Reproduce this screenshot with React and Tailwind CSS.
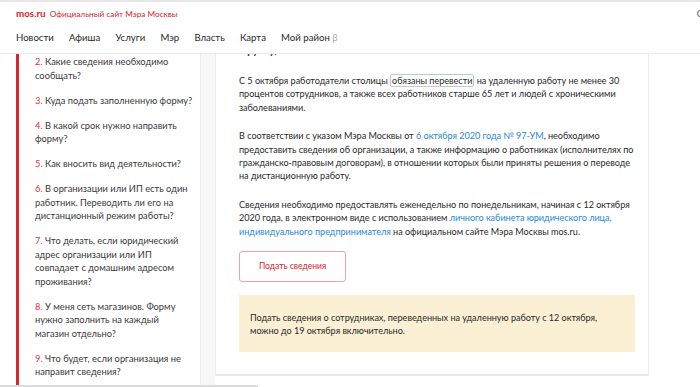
import React from 'react';

// ── Data ───────────────────────────────────────────────
const NAV = ['Новости', 'Афиша', 'Услуги', 'Мэр', 'Власть', 'Карта'];

const QUESTIONS = [
  { n: '2.', lines: ['Какие сведения необходимо', 'сообщать?'] },
  { n: '3.', lines: ['Куда подать заполненную форму?'] },
  { n: '4.', lines: ['В какой срок нужно направить', 'форму?'] },
  { n: '5.', lines: ['Как вносить вид деятельности?'] },
  { n: '6.', lines: ['В организации или ИП есть один', 'работник. Переводить ли его на', 'дистанционный режим работы?'] },
  { n: '7.', lines: ['Что делать, если юридический', 'адрес организации или ИП', 'совпадает с домашним адресом', 'проживания?'] },
  { n: '8.', lines: ['У меня сеть магазинов. Форму', 'нужно заполнить на каждый', 'магазин отдельно?'] },
  { n: '9.', lines: ['Что будет, если организация не', 'направит сведения?'] },
];

// ── Header ─────────────────────────────────────────────
const Header = () => (
  <header className="relative z-10 h-[54px] flex-none border-t-2 border-b border-[#ebebeb] border-t-[#e6e6e6] bg-white">
    <div className="flex items-center justify-between overflow-hidden pl-4 pt-[7px]">
      <div className="flex items-baseline gap-[4px] leading-none text-[#d6262e]">
        <span className="text-[9.8px] font-bold">mos.ru</span>
        <span className="text-[8.2px]">Официальный сайт Мэра Москвы</span>
      </div>
      <span className="-mr-[4px] text-[9px] leading-none text-[#555]">О</span>
    </div>
    <nav className="mt-[12px] flex gap-[15.2px] pl-4 text-[9.6px] leading-[14px] text-[#2a2a2a]">
      {NAV.map(item => (
        <span key={item}>{item}</span>
      ))}
      <span>
        Мой район <span className="text-[#aaa]">β</span>
      </span>
    </nav>
  </header>
);

// ── Sidebar ────────────────────────────────────────────
const Sidebar = () => (
  <aside className="w-[201px] flex-none border-r border-[#ececec] bg-white pl-4">
    <div className="h-full border-l-[3px] border-[#d6262e] pl-[16px] pt-[1px]">
      <div className="flex flex-col gap-[11.5px] text-[9.3px] leading-[13.5px] text-[#3a3a3a]">
        {QUESTIONS.map(q => (
          <div key={q.n} className="whitespace-nowrap">
            {q.lines.map((line, i) => (
              <div key={i}>
                {i === 0 && <span className="text-[#e0323a]">{q.n} </span>}
                {line}
              </div>
            ))}
          </div>
        ))}
      </div>
    </div>
  </aside>
);

// ── Article card ───────────────────────────────────────
const Link = ({ children }) => <span className="text-[#2a88dc]">{children}</span>;

const Article = () => (
  <article className="w-[434px] flex-none self-start border-x border-b-2 border-[#ececec] border-b-[#e8e8e8] bg-white pl-[23px] pr-[13px] pb-[22px] text-[9.1px] leading-[13.4px] tracking-[-0.03px] text-[#2a2a2a]">
    {/* heading, scrolled under the header */}
    <div className="h-[4px] overflow-hidden">
      <div className="-mt-[10px] pl-[4px] text-[10px] font-bold leading-[12px] text-[#222]">Группу,</div>
    </div>

    <div className="mt-[16px] whitespace-nowrap">
      <div>
        С 5 октября работодатели столицы{' '}
        <span className="rounded-[2px] border border-[#bcc9d8] px-[1px]">обязаны перевести</span> на удаленную работу не менее 30
      </div>
      <div>процентов сотрудников, а также всех работников старше 65 лет и людей с хроническими</div>
      <div>заболеваниями.</div>
    </div>

    <div className="mt-[15px] whitespace-nowrap">
      <div>
        В соответствии с указом Мэра Москвы от <Link>6 октября 2020 года № 97-УМ</Link>, необходимо
      </div>
      <div>предоставить сведения об организации, а также информацию о работниках (исполнителях по</div>
      <div>гражданско-правовым договорам), в отношении которых были приняты решения о переводе</div>
      <div>на дистанционную работу.</div>
    </div>

    <div className="mt-[15px] whitespace-nowrap">
      <div>Сведения необходимо предоставлять еженедельно по понедельникам, начиная с 12 октября</div>
      <div>
        2020 года, в электронном виде с использованием <Link>личного кабинета юридического лица,</Link>
      </div>
      <div>
        <Link>индивидуального предпринимателя</Link> на официальном сайте Мэра Москвы mos.ru.
      </div>
    </div>

    <button
      type="button"
      className="mt-[13px] flex h-[31px] w-[107px] items-center justify-center rounded-[3px] border border-[#eaa3a7] text-[8.6px] text-[#d6262e]"
    >
      Подать сведения
    </button>

    <div className="mt-[13px] h-[57px] whitespace-nowrap bg-[#fbf0d4] pl-[11px] pt-[16px]">
      <div>Подать сведения о сотрудниках, переведенных на удаленную работу с 12 октября,</div>
      <div>можно до 19 октября включительно.</div>
    </div>
  </article>
);

// ── Page ───────────────────────────────────────────────
export default function App() {
  return (
    <div className="relative flex h-[387px] w-[700px] flex-col overflow-hidden bg-white font-['Lato',sans-serif]">
      <Header />
      <div className="flex min-h-0 flex-1">
        <Sidebar />
        <div className="w-[14px] flex-none bg-[#f7f7f7]" />
        <Article />
        <div className="flex-1 bg-white" />
      </div>
      {/* horizontal scroll track at the bottom */}
      <div className="absolute bottom-0 left-0 h-[2px] w-[258px] bg-[#dcdcdc]" />
    </div>
  );
}
